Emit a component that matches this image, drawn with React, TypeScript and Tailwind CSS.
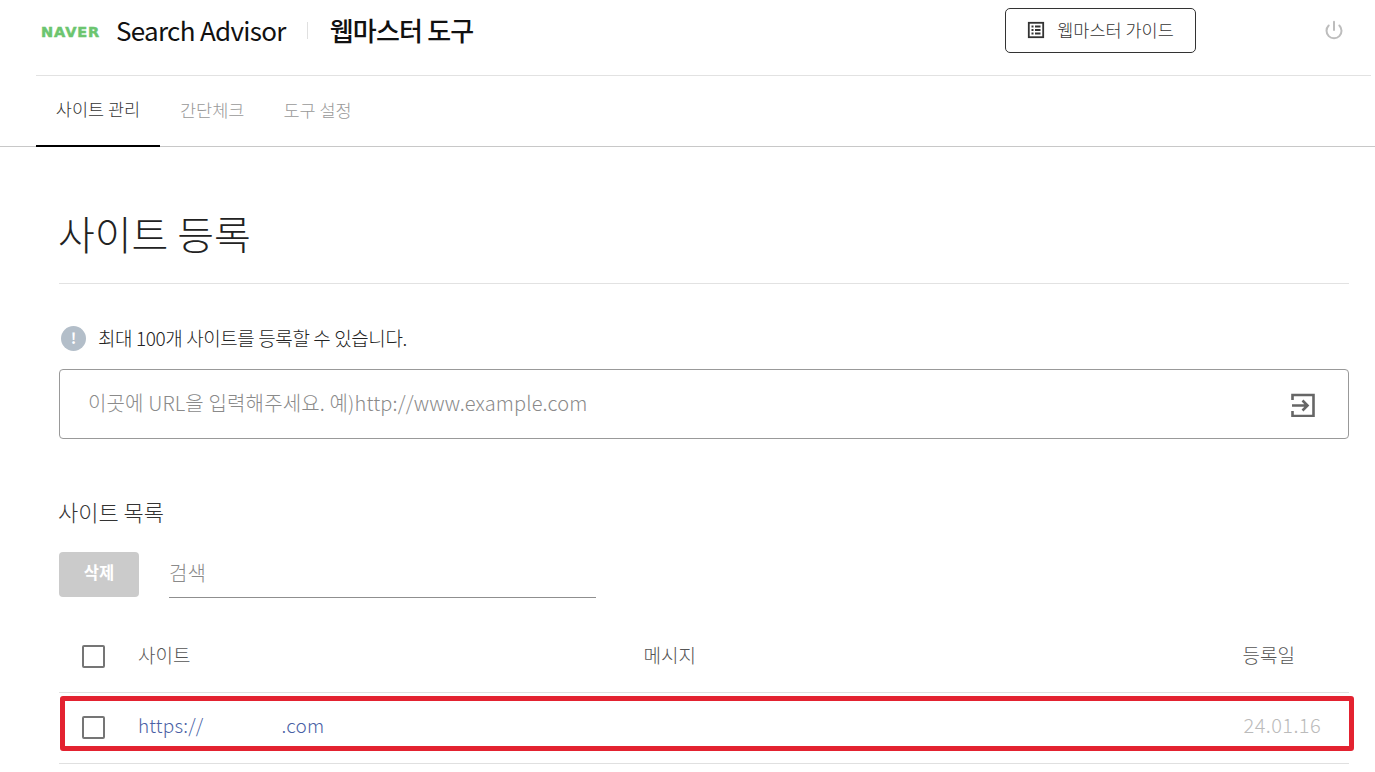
import { Power } from 'lucide-react';

const font = { fontFamily: '"Noto Sans CJK KR", "Noto Sans", sans-serif' };

function GuideIcon() {
  return (
    <svg width="18" height="18" viewBox="0 0 18 18" fill="none" stroke="#333" strokeWidth="1.8">
      <rect x="1.8" y="1.8" width="14.4" height="14.4" />
      <path d="M4.5 5.5h2M8 5.5h5.5M4.5 9h2M8 9h5.5M4.5 12.5h2M8 12.5h5.5" />
    </svg>
  );
}

function SubmitIcon() {
  return (
    <svg className="mt-[5px] mr-[1px]" width="24" height="24" viewBox="0 0 24 24" fill="none" stroke="#666" strokeWidth="2.6">
      <path d="M1.5 7V2h21v21h-21v-5" />
      <path d="M1 12.5h15M11.5 7.5l5 5-5 5" />
    </svg>
  );
}

function Checkbox() {
  return <span className="block w-[23px] h-[23px] border-2 border-[#757575] rounded-[2px] bg-white" />;
}

export default function App() {
  return (
    <div className="relative h-[772px] overflow-hidden bg-white text-[#333]" style={font}>
      <header className="ml-[36px] mr-[4px] h-[76px] border-b border-[#e2e2e2] flex items-center pb-[15px]">
        <span className="ml-[5px] mt-[5px] w-[60px] text-[14.5px] leading-none font-bold text-[#6cc56f] tracking-[0.9px] [-webkit-text-stroke:0.5px_#6cc56f]" style={{ fontFamily: '"DejaVu Sans", sans-serif' }}>NAVER</span>
        <span className="ml-[15px] text-[26px] leading-none font-normal text-[#111] tracking-[-0.7px]">Search Advisor</span>
        <span className="ml-[21px] w-px h-[17px] bg-[#e0e0e0]" />
        <span className="ml-[22px] text-[26px] leading-none font-medium text-[#111] tracking-[-0.8px]">웹마스터 도구</span>
        <button className="ml-auto mr-[128px] w-[191px] h-[45px] border border-[#333] rounded-[5px] flex items-center justify-center gap-[12px] text-[17.5px] font-light text-[#333]">
          <GuideIcon />
          웹마스터 가이드
        </button>
        <Power size={20} strokeWidth={2.4} className="mr-[27px] text-[#bdbdbd]" />
      </header>

      <nav className="h-[71px] border-b border-[#c8c8c8] pl-[36px] flex text-[17.5px] font-light">
        <a className="w-[124px] h-[71px] pb-[2px] border-b-2 border-black flex items-center justify-center text-[#333]">사이트 관리</a>
        <a className="ml-[20px] h-[68px] flex items-center text-[#999]">간단체크</a>
        <a className="ml-[39px] h-[68px] flex items-center text-[#999]">도구 설정</a>
      </nav>

      <main className="pl-[59px]">
        <div className="w-[1290px]">
          <h1 className="h-[137px] border-b border-[#e2e2e2] pt-[56px] text-[40px] leading-[60px] font-light text-[#222] indent-[-1px]">사이트 등록</h1>

          <div className="mt-[40px] flex items-center gap-[12px] h-[28px]">
            <span className="ml-[2px] w-[25px] h-[25px] rounded-full bg-[#b3bec9] text-white text-[15px] font-bold flex items-center justify-center">!</span>
            <span className="text-[19px] font-light tracking-[-0.4px] text-[#222]">최대 100개 사이트를 등록할 수 있습니다.</span>
          </div>

          <div className="mt-[17px] h-[70px] border border-[#999] rounded-[4px] pl-[28px] pr-[32px] pb-[3px] flex items-center justify-between">
            <span className="text-[20px] tracking-[0.15px] font-light text-[#8a8a8a]">이곳에 URL을 입력해주세요. 예)http://www.example.com</span>
            <SubmitIcon />
          </div>

          <h2 className="mt-[56px] text-[22px] leading-[32px] font-light text-[#333] indent-[-1px]">사이트 목록</h2>

          <div className="mt-[25px] flex items-start">
            <button className="w-[80px] h-[45px] pb-[4px] rounded-[4px] bg-[#cbcbcb] text-white text-[16.5px] font-bold">삭제</button>
            <div className="ml-[30px] w-[427px] h-[46px] pb-[4px] border-b border-[#8f8f8f] flex items-center text-[20px] font-light text-[#8a8a8a]">검색</div>
          </div>

          <div className="mt-[34px] h-[61px] border-b border-[#e0e0e0] flex items-start pt-[11px] text-[19px] font-light text-[#555]">
            <span className="ml-[23px] mt-[2px]"><Checkbox /></span>
            <span className="ml-[33px] leading-[24px]">사이트</span>
            <span className="ml-[453px] leading-[24px]">메시지</span>
            <span className="ml-auto mr-[54px] leading-[24px]">등록일</span>
          </div>

          <div className="h-[71px] border-b border-[#e0e0e0] flex items-center text-[19px] font-light">
            <span className="ml-[23px] mb-[1px]"><Checkbox /></span>
            <a className="ml-[33px] mb-[6px] text-[#4a5fa5] tracking-[0.2px]">https://<span className="inline-block w-[78px]" />.com</a>
            <span className="ml-auto mr-[28px] mb-[6px] text-[#bbb] text-[20px] tracking-[0.4px]">24.01.16</span>
          </div>
        </div>
      </main>

      {/* red annotation box around the first row */}
      <div className="absolute left-[60px] top-[696px] w-[1294px] h-[55px] border-[5px] border-[#e32230] rounded-[3px]" />
    </div>
  );
}
